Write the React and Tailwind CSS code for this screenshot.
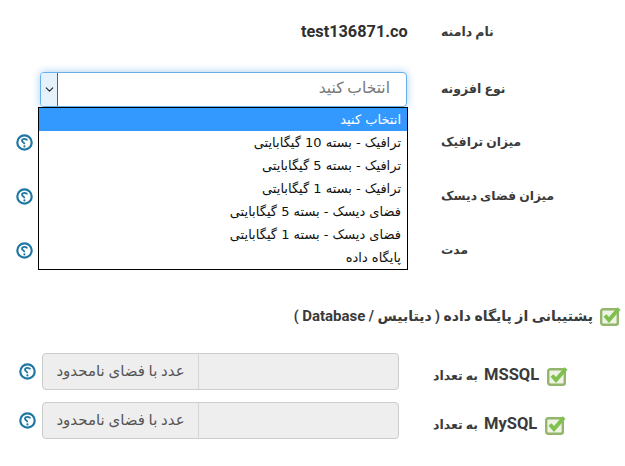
import React from "react";
import { ChevronDown } from "lucide-react";

const options = [
  "انتخاب کنید",
  "ترافیک - بسته 10 گیگابایتی",
  "ترافیک - بسته 5 گیگابایتی",
  "ترافیک - بسته 1 گیگابایتی",
  "فضای دیسک - بسته 5 گیگابایتی",
  "فضای دیسک - بسته 1 گیگابایتی",
  "پایگاه داده",
];

const HelpIcon = () => (
  <svg width="17" height="17" viewBox="0 0 17 17" className="shrink-0">
    <circle cx="8.5" cy="8.5" r="7.2" fill="#fff" stroke="#1f78a4" strokeWidth="2.2" />
    <path d="M11 6.6 C11 4.4 6 4.4 6 6.8 C6 8.4 8.4 8.2 8.4 10.2" fill="none" stroke="#1f78a4" strokeWidth="1.8" />
    <circle cx="8.4" cy="12.4" r="1.1" fill="#1f78a4" />
  </svg>
);

const CheckIcon = () => (
  <svg width="21" height="20" viewBox="0 0 21 20" className="shrink-0">
    <rect x="1.2" y="3.2" width="16.6" height="15.6" rx="2" fill="#eef3e4" stroke="#93b56c" strokeWidth="2.4" />
    <path d="M5 9.5 L9 14 L19 2.5" fill="none" stroke="#7fc04f" strokeWidth="4" />
  </svg>
);

const CountRow = ({ name }) => (
  <div className="flex h-[37px] items-center">
    <div className="flex w-[42px] shrink-0 pl-[19px]">
      <HelpIcon />
    </div>
    <div className="flex h-[37px] w-[357px] overflow-hidden rounded-[4px] border border-[#cccccc] bg-[#eeeeee]">
      <div className="flex w-[156px] items-center justify-center border-r border-[#d5d5d5] text-[15px] text-[#555555]" dir="rtl">
        عدد با فضای نامحدود
      </div>
    </div>
    <div className="ml-[34px] flex items-center gap-[8px] pt-[9px] font-bold text-[#3a3a3a]">
      <span className="whitespace-nowrap">
        <span dir="rtl" className="text-[12.5px]">به تعداد</span> <span className="ml-[2px] text-[16.5px]">{name}</span>
      </span>
      <CheckIcon />
    </div>
  </div>
);

export default function App() {
  return (
    <div className="relative h-[466px] w-[625px] overflow-hidden bg-white font-['Roboto','DejaVu_Sans',sans-serif]">
      {/* Domain */}
      <div className="flex h-[72px] items-center pb-[8px]">
        <div className="w-[301px]" />
        <div className="w-[140px] text-[16.3px] font-bold text-[#2f2f2f]">test136871.co</div>
        <div className="text-[12.5px] font-bold text-[#3a3a3a]" dir="rtl">نام دامنه</div>
      </div>

      {/* Addon type */}
      <div className="flex h-[35px] items-center">
        <div className="ml-[40px] flex h-[35px] w-[367px] overflow-hidden rounded-[4px] border border-[#66afe9] bg-white shadow-[0_0_8px_rgba(102,175,233,0.6)]">
          <div className="-ml-px -my-px flex w-[18px] items-center justify-center border border-[#0078d7] bg-[#e5f1fb] text-[#222]">
            <ChevronDown size={13} />
          </div>
          <div className="flex-1 pr-[16px] text-right text-[15.5px] leading-[31px] text-[#777777]" dir="rtl">
            انتخاب کنید
          </div>
        </div>
        <div className="ml-[34px] text-[12.5px] font-bold text-[#3a3a3a]" dir="rtl">نوع افزونه</div>
      </div>

      {/* Rows behind the open list */}
      <div className="mt-[8px] flex h-[54px] items-center">
        <div className="ml-[16px] w-[425px]"><HelpIcon /></div>
        <div className="text-[12.3px] font-bold text-[#3a3a3a]" dir="rtl">میزان ترافیک</div>
      </div>
      <div className="flex h-[54px] items-center">
        <div className="ml-[16px] w-[425px]"><HelpIcon /></div>
        <div className="text-[12.3px] font-bold text-[#3a3a3a]" dir="rtl">میزان فضای دیسک</div>
      </div>
      <div className="flex h-[54px] items-center">
        <div className="ml-[16px] w-[425px]"><HelpIcon /></div>
        <div className="text-[12.3px] font-bold text-[#3a3a3a]" dir="rtl">مدت</div>
      </div>

      {/* Database heading */}
      <div className="mt-[28px] flex items-center justify-end gap-[7px] pr-[4px] text-[14px] font-bold text-[#3a3a3a]">
        <span dir="rtl" className="whitespace-nowrap">پشتیبانی از پایگاه داده ( دیتابیس / <span className="text-[15px]">Database</span> )</span>
        <CheckIcon />
      </div>

      <div className="mt-[25px] flex flex-col gap-[12px]">
        <CountRow name="MSSQL" />
        <CountRow name="MySQL" />
      </div>

      {/* Open select list */}
      <ul className="absolute left-[38px] top-[107px] w-[370px] border border-black bg-white text-[13px] text-[#111]" dir="rtl" style={{ fontFamily: "'DejaVu Sans', sans-serif" }}>
        {options.map((o, i) => (
          <li key={o} className={i === 0 ? "h-[23px] bg-[#3399ff] pr-[6px] leading-[23px] text-white" : "h-[23px] pr-[6px] leading-[23px]"}>
            {o}
          </li>
        ))}
      </ul>
    </div>
  );
}
